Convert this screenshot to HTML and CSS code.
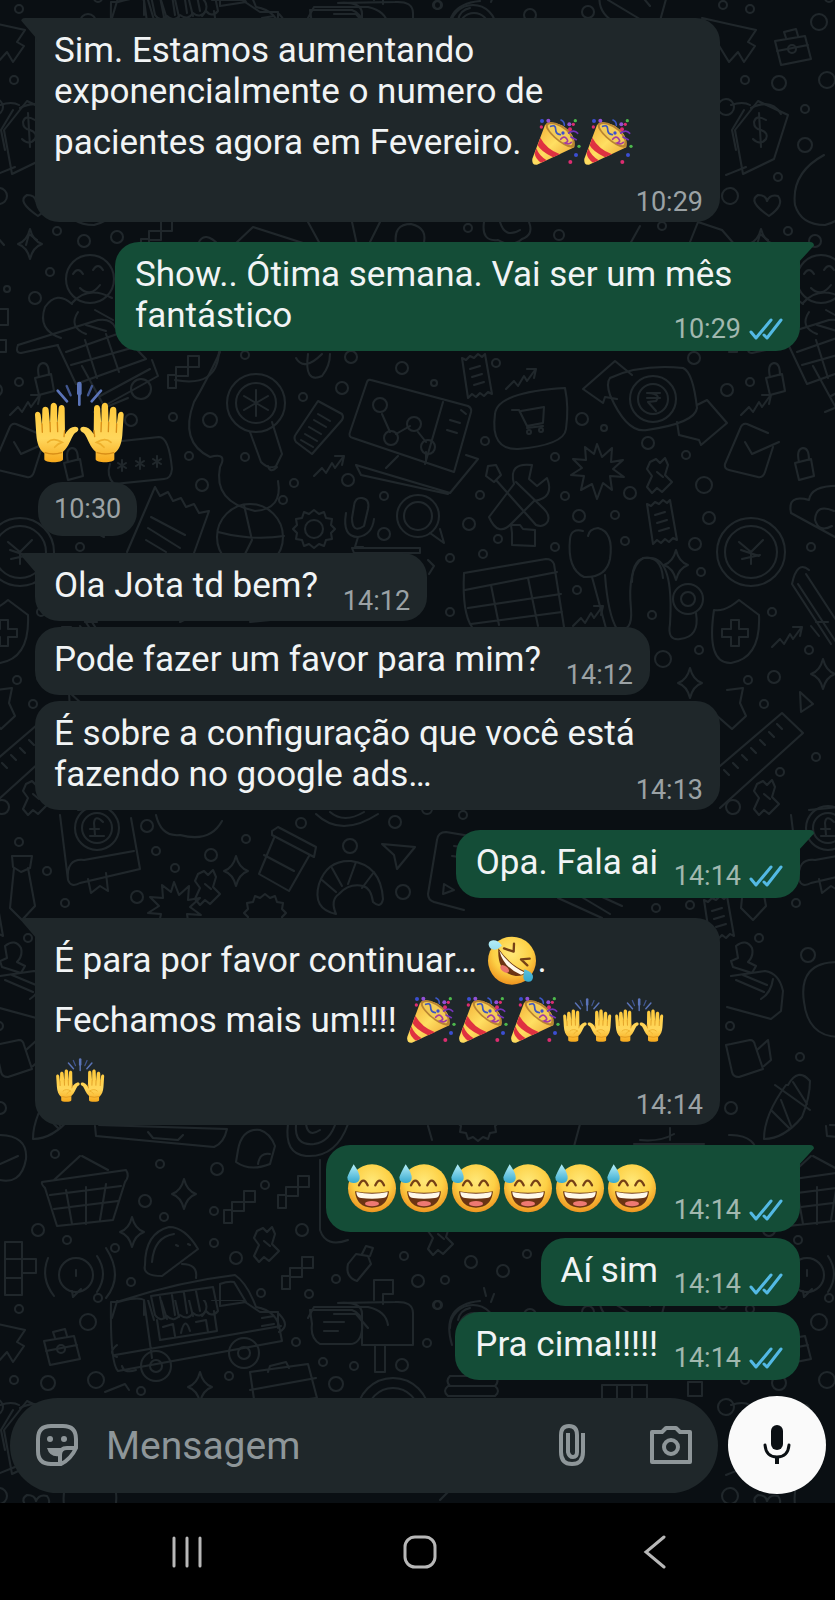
FILE: index.html
```html
<!DOCTYPE html>
<html lang="pt-br">

<head>
    <meta charset="UTF-8">
    <meta name="viewport" content="width=device-width, initial-scale=1.0">
    <title>Conversa</title>

    <link rel="stylesheet" href="styles.css">

</head>

<body>

    <!-- emojis e icones reutilizados -->
    <svg class="defs" aria-hidden="true">
        <defs>
            <linearGradient id="gHand" x1="0" y1="0" x2="0" y2="1">
                <stop offset="0" stop-color="#ffc93a" />
                <stop offset=".6" stop-color="#ffd75c" />
                <stop offset="1" stop-color="#f7a91c" />
            </linearGradient>
            <radialGradient id="gFace" cx=".5" cy=".35" r=".65">
                <stop offset="0" stop-color="#ffe878" />
                <stop offset=".6" stop-color="#fdd045" />
                <stop offset="1" stop-color="#ee9420" />
            </radialGradient>
            <linearGradient id="gDrop" x1="0" y1="0" x2="0" y2="1">
                <stop offset="0" stop-color="#b5eef8" />
                <stop offset="1" stop-color="#35a9cf" />
            </linearGradient>
            <linearGradient id="gCone" x1="0" y1="0" x2="1" y2="1">
                <stop offset="0" stop-color="#f0a52c" />
                <stop offset=".5" stop-color="#ffdf62" />
                <stop offset="1" stop-color="#e8982a" />
            </linearGradient>

            <g id="hand">
                <path fill="url(#gHand)" d="M12 122c0-12 15-12 17 0l4 32 1-46c0-13 18-13 19 0l4 42 2-53c0-14 18-14 19 0l1 53 4-48c1-13 18-12 18 1l1 78c5-9 13-18 22-21 11-4 19 0 18 7-1 6-8 7-13 13-10 14-15 39-33 53v23c0 12-56 12-56 0v-18c-16-12-22-31-24-55z" />
                <path fill="none" stroke="#d88e17" stroke-width="4" stroke-linecap="round" d="M33 150l1 25M57 145l1 28M79 145l1 28M101 170l-2 18M42 236q24 8 50 0" />
                <path fill="none" stroke="#eeb02c" stroke-width="5" stroke-linecap="round" d="M50 205q17-16 43 0q-12 3-22 15" />
            </g>
            <symbol id="hands" viewBox="0 0 288 288">
                <use href="#hand" />
                <use href="#hand" transform="matrix(-1 0 0 1 290 0)" />
                <g stroke-linecap="round" stroke="#5b74b8">
                    <path stroke-width="14" d="M145 30v28" />
                    <path stroke-width="8" d="M145 50v42M80 50l28 32M210 50l-28 32" />
                    <path stroke-width="7" stroke="#40558d" d="M107 36l12 28M183 36l-12 28" />
                </g>
            </symbol>

            <symbol id="party" viewBox="0 0 156 156">
                <path fill="url(#gCone)" d="M45 27L7 128q-3 20 14 18l112-52q6-40-38-66-36-16-50-1z" />
                <path fill="#df3141" d="M31 65q18 34 59 50l-21 9q-36-17-46-36zM19 97q8 22 31 36l-17 7q-17-11-19-28z" />
                <path fill="#b98432" d="M47 27q2-14 30-7 44 14 56 55 3 20-7 20-23-2-54-30-26-24-25-38z" />
                <path fill="#f3cc58" d="M53 29q3-8 24-3 38 13 50 47 2 15-6 15-20-3-45-26-22-21-23-33z" />
                <g fill="none" stroke-width="5" stroke-linecap="round">
                    <path stroke="#3d57c2" d="M62 31q15-6 15 9t14 16M93 12q10 4 10 16" />
                    <path stroke="#a43d9f" d="M92 70q10-12 18-2t-5 13q11 6 19-2" />
                    <path stroke="#7634bb" d="M116 51q17-12 27 1M123 63l16 8" />
                </g>
                <g fill="#dc2d70"><circle cx="34" cy="33" r="5" /><circle cx="120" cy="40" r="6" /><circle cx="130" cy="25" r="5" /><circle cx="121" cy="138" r="6" /></g>
                <g fill="#3b4fd2"><circle cx="36" cy="15" r="6" /><circle cx="138" cy="117" r="6" /><circle cx="99" cy="51" r="5" /></g>
                <g fill="#4db84c"><circle cx="136" cy="14" r="5" /><circle cx="147" cy="91" r="5" /></g>
                <g fill="#9250d6"><circle cx="55" cy="14" r="6" /><circle cx="118" cy="25" r="6" /></g>
            </symbol>

            <symbol id="sweat" viewBox="0 0 156 156">
                <circle cx="78" cy="82" r="72" fill="url(#gFace)" />
                <path fill="none" stroke="#754016" stroke-width="7" stroke-linecap="round" d="M39 73q13-28 26 0M88 73q13-28 26 0" />
                <path fill="#6b3413" d="M27 91q51 9 102 0-5 49-51 49T27 91z" />
                <path fill="#fff9e9" d="M31 93q47 10 94 0 1 17-14 18-33 5-66 0-14-1-14-18z" />
                <ellipse cx="78" cy="128" rx="21" ry="8" fill="#ee7973" />
                <path fill="url(#gDrop)" d="M23 10q20 28 18 43-4 14-19 13Q4 65 4 49q5-15 19-39z" />
            </symbol>

            <symbol id="rofl" viewBox="0 0 156 156">
                <circle cx="78" cy="80" r="72" fill="url(#gFace)" />
                <path fill="#6b3413" d="M37 43q32 48 82 70-4 14-30 13-56-8-52-83z" />
                <path fill="#fff9e9" d="M40 50q31 45 75 65-2 7-10 7-52-21-65-72z" />
                <ellipse cx="56" cy="105" rx="15" ry="9" transform="rotate(38 56 105)" fill="#e8746c" />
                <path fill="none" stroke="#754016" stroke-width="7" stroke-linecap="round" stroke-linejoin="round" d="M54 43l29 10 1-24M131 74l-26 2 19 18" />
                <path fill="url(#gDrop)" d="M48 35q-12-17-27-16-14 2-13 14 3 14 18 14 10-1 22-12zM115 106q25 8 26 23-1 15-15 14-14-2-14-15z" />
            </symbol>

            <symbol id="ticks" viewBox="0 0 34 22">
                <path fill="none" stroke="#53b9e4" stroke-width="3" stroke-linecap="round" stroke-linejoin="round" d="M2 14l5 6L22 2M15 17l3 3L32 2" />
            </symbol>
        </defs>
    </svg>

    <main class="screen">

        <!-- papel de parede -->
        <svg class="wallpaper" aria-hidden="true">
            <defs>
                <path id="spark" d="M0-15Q3-3 12 0 3 3 0 15-3 3-12 0-3-3 0-15z" />
                <path id="zig" d="M-14 9l8-8 4 5 6-10 3 5 8-11m-8-1l9 0-2 9" />
                <path id="burst" d="M0-24l5 13 10-9-1 14 12-2-10 9 11 8-14-1 2 14-9-7-6 16-5-15-11 6 3-14-13-1 11-7-9-9 13 1-1-13 9 7z" />
                <path id="lock" d="M-9-4L7-8l3 17-15 4zM-5-5q-3-13 4-14 6 0 6 12" />
                <path id="candy" d="M-9-14l6-3 4 4 5-5 3 7-3 10 7 7-10 10-5-4-5 5-5-6 5-11-5-7zM-2-4l6 5" />
                <path id="steps" d="M-14 16V3h8v-8H6v-11h11v11H6V4h-12v12z" />
                <path id="gear" d="M0-19l5 4 5-2 2 6 6 1-1 6 4 4-4 4 1 6-6 1-2 6-5-2-5 4-5-4-5 2-2-6-6-1 1-6-4-4 4-4-1-6 6-1 2-6 5 2z" />
                <g id="case"><path d="M-17-8l30-5 6 23-30 6zM-6-11l-2-6 12-3 2 7M-15 2l31-6" /><circle r="4" /></g>
                <g id="note"><path d="M-14-20l4 2 4-4 4 2 4-4 4 3 3-3 7 40-4-2-4 4-4-3-4 4-4-3-4 4zM-6-9l10-3M-4-1l10-3M-2 7l10-3" /></g>

                <g id="tile">
                    <!-- bolinhas -->
                    <circle cx="19" cy="9" r="4" /><circle cx="437" cy="5" r="4" /><circle cx="530" cy="15" r="6" /><circle cx="588" cy="12" r="6" /><circle cx="723" cy="5" r="4" />
                    <circle cx="88" cy="22" r="8" /><circle cx="14" cy="80" r="4" /><circle cx="48" cy="83" r="7" /><circle cx="96" cy="80" r="8" /><circle cx="726" cy="107" r="8" />
                    <circle cx="74" cy="109" r="4" /><circle cx="74" cy="145" r="7" /><circle cx="47" cy="177" r="4" /><circle cx="730" cy="196" r="8" /><circle cx="57" cy="231" r="4" />
                    <circle cx="84" cy="241" r="6" /><circle cx="117" cy="237" r="6" /><circle cx="468" cy="228" r="4" /><circle cx="559" cy="235" r="5" /><circle cx="662" cy="226" r="4" />
                    <circle cx="50" cy="272" r="4" /><circle cx="7" cy="289" r="3" /><circle cx="35" cy="298" r="6" /><circle cx="245" cy="355" r="4" /><circle cx="351" cy="357" r="6" />
                    <circle cx="694" cy="358" r="6" /><circle cx="496" cy="363" r="4" /><circle cx="19" cy="382" r="4" /><circle cx="402" cy="368" r="6" /><circle cx="434" cy="383" r="3" />
                    <circle cx="342" cy="388" r="6" /><circle cx="303" cy="397" r="4" /><circle cx="141" cy="389" r="10" /><circle cx="210" cy="420" r="7" /><circle cx="173" cy="417" r="4" />
                    <circle cx="131" cy="420" r="6" /><circle cx="189" cy="456" r="4" /><circle cx="245" cy="457" r="4" /><circle cx="202" cy="485" r="6" /><circle cx="294" cy="483" r="4" />
                    <circle cx="348" cy="480" r="6" /><circle cx="283" cy="500" r="4" /><circle cx="384" cy="496" r="4" /><circle cx="384" cy="534" r="6" /><circle cx="469" cy="524" r="6" />
                    <circle cx="480" cy="495" r="4" /><circle cx="555" cy="457" r="4" /><circle cx="565" cy="496" r="4" /><circle cx="485" cy="441" r="4" /><circle cx="582" cy="419" r="6" />
                    <circle cx="604" cy="428" r="3" /><circle cx="648" cy="443" r="6" /><circle cx="686" cy="455" r="4" /><circle cx="704" cy="485" r="8" /><circle cx="630" cy="493" r="6" />
                    <circle cx="727" cy="390" r="6" /><circle cx="498" cy="539" r="4" /><circle cx="483" cy="554" r="4" /><circle cx="450" cy="558" r="4" /><circle cx="579" cy="516" r="6" />
                    <circle cx="615" cy="515" r="4" /><circle cx="709" cy="518" r="6" /><circle cx="695" cy="544" r="6" /><circle cx="625" cy="541" r="4" /><circle cx="555" cy="547" r="4" />
                    <circle cx="701" cy="572" r="4" /><circle cx="577" cy="590" r="4" /><circle cx="450" cy="612" r="4" /><circle cx="652" cy="615" r="4" /><circle cx="80" cy="547" r="4" />
                    <circle cx="41" cy="612" r="4" /><circle cx="663" cy="659" r="8" /><circle cx="699" cy="650" r="4" /><circle cx="78" cy="650" r="4" /><circle cx="17" cy="680" r="4" />
                    <circle cx="43" cy="677" r="6" /><circle cx="33" cy="704" r="4" /><circle cx="85" cy="757" r="4" /><circle cx="49" cy="772" r="4" /><circle cx="2" cy="807" r="7" />
                    <circle cx="427" cy="809" r="5" /><circle cx="463" cy="815" r="4" /><circle cx="19" cy="842" r="4" /><circle cx="147" cy="826" r="6" /><circle cx="47" cy="871" r="4" />
                    <circle cx="65" cy="903" r="4" /><circle cx="156" cy="851" r="4" /><circle cx="175" cy="868" r="4" /><circle cx="211" cy="855" r="6" /><circle cx="137" cy="897" r="6" />
                    <circle cx="246" cy="839" r="4" /><circle cx="350" cy="846" r="7" /><circle cx="403" cy="892" r="7" /><circle cx="301" cy="823" r="5" /><circle cx="395" cy="822" r="6" />
                    <circle cx="656" cy="908" r="4" /><circle cx="690" cy="905" r="4" /><circle cx="28" cy="938" r="4" /><circle cx="77" cy="955" r="7" /><circle cx="730" cy="1026" r="4" />
                    <circle cx="69" cy="1057" r="4" /><circle cx="731" cy="1108" r="6" /><circle cx="55" cy="1154" r="4" /><circle cx="160" cy="1164" r="4" /><circle cx="217" cy="1169" r="6" />
                    <circle cx="145" cy="1201" r="6" /><circle cx="214" cy="1211" r="4" /><circle cx="265" cy="1185" r="4" /><circle cx="164" cy="1217" r="4" /><circle cx="38" cy="1230" r="6" />
                    <circle cx="67" cy="1240" r="4" /><circle cx="115" cy="1248" r="4" /><circle cx="214" cy="1243" r="4" /><circle cx="236" cy="1258" r="6" /><circle cx="302" cy="1230" r="6" />
                    <circle cx="404" cy="1256" r="4" /><circle cx="471" cy="1262" r="6" /><circle cx="503" cy="1271" r="6" /><circle cx="418" cy="1281" r="6" /><circle cx="336" cy="1279" r="4" />
                    <circle cx="445" cy="1280" r="4" /><circle cx="131" cy="1282" r="4" /><circle cx="98" cy="1298" r="4" /><circle cx="261" cy="1293" r="4" /><circle cx="309" cy="1294" r="4" />
                    <circle cx="527" cy="1254" r="4" /><circle cx="438" cy="1305" r="4" /><circle cx="296" cy="1342" r="4" /><circle cx="427" cy="1343" r="4" /><circle cx="323" cy="1362" r="4" />
                    <circle cx="354" cy="1366" r="4" /><circle cx="402" cy="1365" r="6" /><circle cx="229" cy="1376" r="4" /><circle cx="336" cy="1384" r="7" /><circle cx="141" cy="1391" r="4" />

                    <!-- repetidos -->
                    <use href="#spark" x="30" y="244" /><use href="#spark" x="676" y="565" /><use href="#spark" x="690" y="683" /><use href="#spark" x="92" y="674" />
                    <use href="#spark" x="236" y="871" /><use href="#spark" x="184" y="1194" /><use href="#spark" x="132" y="1232" /><use href="#spark" x="200" y="1387" />
                    <use href="#zig" x="520" y="380" /><use href="#zig" x="24" y="406" /><use href="#zig" x="328" y="467" /><use href="#zig" x="587" y="617" /><use href="#zig" x="55" y="638" />
                    <use href="#burst" x="597" y="468" /><use href="#burst" x="174" y="906" />
                    <use href="#lock" x="44" y="382" /><use href="#lock" x="73" y="467" />
                    <use href="#candy" x="659" y="476" /><use href="#candy" x="207" y="888" /><use href="#candy" x="266" y="1245" /><use href="#candy" x="35" y="798" /><use href="#candy" x="440" y="1238" />
                    <use href="#steps" x="182" y="372" /><use href="#steps" x="155" y="236" /><use href="#steps" x="296" y="1273" /><use href="#steps" x="292" y="1192" /><use href="#steps" x="238" y="1207" />
                    <use href="#gear" x="314" y="529" /><circle cx="314" cy="529" r="9" /><use href="#gear" x="478" y="1122" /><use href="#gear" x="265" y="913" />
                    <use href="#case" x="61" y="1349" />
                    <use href="#note" x="476" y="378" /><use href="#note" x="661" y="524" /><use href="#note" x="718" y="920" />

                    <!-- topo -->
                    <path d="M-29 18L25 30 17 42l7 4-11 16-6-10-9 10zM112 18l6-20q20-8 26 0v17M148 0l6 20M160-3l7 22M174-5l5 22M188-4l5 20M202-2q9 8 0 18M212 0h30l18 12h18v16" />
                    <path d="M308 18l6-11h54q18 4 20 18M334 14h22l12 14M450 28a23 23 0 0 1 46 0M459 28a15 15 0 0 1 30 0M608 0l50 30M600-8q-4 22 18 32M640-6l10 12M668-8l-10 36" />
                    <path d="M27 101L4 130l8 44 31-15 14-44zM35 120q-10-6-12 2 0 7 7 8 8 3 5 9-6 7-13 0M28 113l2 34" />
                    <path d="M93 155q-33 18-29 50 6 20 30 20 25-6 22-32M0 105q12-4 19 0M-5 175l20-8" />
                    <path d="M38 216q-22-15-11-21 8 0 9 6 3-7 11-5 7 9-9 20z" />
                    <path d="M198 244q6-15 22 2M235 244l18-17 53 17M308 222l12 22M352 222l5 23M396 244q-3-20 15-20 18 4 12 22M380 222l-10 20M484 222q-3 20 14 18 14 8 24-1 12-4 7-17M500 222q5 17 20 8M630 244l10-18M690 242l8-20 24 8 13 15M757 245l3-11 8 6" />
                    <circle cx="90" cy="279" r="24" /><path d="M73 274q5-8 10 0M93 270q5-8 10 0M80 288q10 10 20-3M72 304q-15-14-27 3-8 23 16 31M72 303q16-18 40-5M78 312q-10 15 8 22M95 310l18 10M86 325l20 6" />
                    <path d="M18 345l80-25q13-2 17 7l31 32-70 25-18-38M18 345q-3 8 3 8l37-8M66 352l57-20M71 365l64-18M85 340l12 38M106 334l13 38M-2 309h10v16H-2M-2 340h8v12h-8" />
                    <path d="M82 366l22 40 54-30-6-16M100 396l50-27M175 380q42 8 44-28M128 398l-34 14" />

                    <!-- faixa central -->
                    <path d="M220 352q-14 30-26 50-15 40 16 55 18-5 10 10-7 35 35 44 28-2 23-30M296 358q8 14 26-4M308 354q-4 30 14 22 8-10 8-22" />
                    <circle cx="256" cy="403" r="29" /><circle cx="256" cy="403" r="20" /><path d="M256 390v26M244 396l24 14M244 410l24-14M250 432l11 30q8 8 15 4l6-12-10-32M268 466q2 8 9 1" />
                    <path d="M318 401l24 13q2 3 0 6l-30 34-16-12q-3-4 0-8zM318 414l12 7M314 420l12 7M309 427l12 7M305 434l12 7M301 440l12 7" />
                    <path d="M371 380l97 26q4 2 3 6l-17 60-101-34q-5-1-3-6l17-50q1-3 4-2zM443 402l-18 62M461 410l5 4M450 420l10 3M447 430l10 3M356 465l94 28 28-34-12-4M356 465l5 10 87 19M386 468l12-12M382 414l8 18M396 434l14-8M418 432l8 10M426 452v10" />
                    <circle cx="380" cy="405" r="7" /><circle cx="391" cy="438" r="7" /><circle cx="414" cy="424" r="7" /><circle cx="428" cy="447" r="7" />
                    <path d="M565 388q-68 4-70 26-5 36 23 35 46-4 48-20 3-22-1-41zM512 410h7l8 16 16-3 1-16-23 4M527 428l16-2" /><circle cx="529" cy="432" r="2" /><circle cx="541" cy="430" r="2" />
                    <path d="M632 375l-17-14-32 28 20 14 2-6 12 2M610 378q30-14 73-10 10 4 14 40-2 15-50 22-20 4-37-35-4-12 0-17zM697 405l10-5 20 23-26 22-2-5-20-5-2-13" />
                    <circle cx="653" cy="399" r="23" /><circle cx="653" cy="399" r="15" /><path d="M647 393h13M647 398h13M648 393q14 1 8 8l-8 1 8 9" />
                    <path d="M37 433l-21-9q-5-1-7 5l-15 35q-1 5 4 6l29 7q5 1 7-5l8-25M14 442l7 12 27-12" />
                    <path d="M488 466l8-1 5 10-7 7-8-6zM496 480l40 45q8 3 12-4 2-6-4-12l-28-27M489 517l25-33q-6-22 18-19l-3 14 8 7 10-8q8 20-13 23l-22 22q-14 15-23-6z" />
                    <circle cx="418" cy="516" r="21" /><circle cx="418" cy="516" r="14" /><path d="M430 533l14 10-4-14" />
                    <path d="M354 506q1-9 8-8 8 1 6 11l-4 17q-12 8-12-8zM346 513q-4 24 12 24 14-2 16-18M358 537l-3 10h8" />
                    <circle cx="250" cy="537" r="33" /><path d="M244 505l8 35M218 532q34 9 66 4M252 540l-14 28" />
                    <path d="M155 487l-28 65M155 487l5 9 8-4 5 9 8-3 5 9 8-3 5 9 10-2-15 42M151 517l34 18M148 528l32 20M146 540l20 12" />
                    <path d="M113 442l46-5q10 0 13 32-1 10-8 10l-50 5q-8-8-4-20M122 460v11M118 463l8 5M126 463l-8 5M140 458v11M136 461l8 5M144 461l-8 5M157 456v11M153 459l8 5M161 459l-8 5" />
                    <path d="M512 533v12l23 1v-16l-12-1-3-4h-9zM583 531q-12-3-13 8-3 30 14 38 22 1 26-18 4-27-12-31-9 1-10 8M592 577l15 55M605 575q3 40 12 54 16 4 14-20-4-40 12-51 18-3 20 20" />
                    <circle cx="688" cy="599" r="15" /><circle cx="688" cy="599" r="7" /><path d="M650 558q-18-2-18 24M650 558q24 0 20 66-3 17 10 15 20-2 16-26" />
                    <circle cx="20" cy="552" r="34" /><circle cx="20" cy="552" r="26" /><path d="M20 552v12M20 552l-12-10M20 552l12-12M10 550l18 6M11 559l18-4" />
                    <path d="M845 486q-34-2-36 14-22-6-18 13l44 24M834 511q-18-8-19 9 4 13 17 6M809 570q-12-10-17 14l39 60M798 584l38 58M806 574l30 46" />
                    <path d="M464 573l82-14q6 0 8 5l10 63-9 9M464 573q-2 40 8 54M465 590l92-18M468 608l93-14M471 624l91-12M491 585l8 40M528 578l10 48M352 548h68v5h-66zM428 560l6 6-5 8" />
                    <path d="M8 600q-14 12-25 10-8 54 17 53 30-5 28-48zM0 620h8v9h9v8H8v9H0v-9h-9v-8h9z" />
                    <path d="M727 690l16-2-3 15 6 13-14 13-16-14M800 692l13 12-12 8zM720 766l62-53 21 20-83 75M724 770l5 5M733 763l5 5M742 755l5 5M751 748l5 5M760 740l5 5M769 732l5 5M777 724l5 5" />
                    <path d="M80 626l8 10M85 622h12M180 622l8-4M250 622l20-2" />

                    <!-- parte de baixo -->
                    <path d="M60 815l8 65q3 8 12 3l60-14-9-51M68 880q-2-22 16-20l50-9M88 879l3 14 9-7 8 5-2-18M78 810l40-4" /><circle cx="97" cy="828" r="22" /><circle cx="97" cy="828" r="15" /><path d="M103 822q-8-8-9 1l1 12M90 829h9M90 836h14" />
                    <path d="M156 815q5 22 24 20 30 8 42-14M316 814q25 24 62 0M330 812q14 12 34 0M12 856h20l-2 12-9 4-8-5zM14 868l-4 40 12 12 13-14-7-38M272 835l42 22 2-10-38-20-6 4zM274 838l-15 36 30 17 20-35M264 855l30 16" />
                    <path d="M336 914q-24-5-17-30 8-24 32-23 30 4 32 38-2 10-10 3-2-14-10-16-14-3-24 8-9 6-3 20zM332 868l10 18M356 862l-8 22M374 872l-12 16M322 880l14 12" />
                    <path d="M382 844l33 3-18 22-3-14zM470 836l-24-4q-8 0-9 8l-9 54q0 6 6 8l30 8M454 846l14 2M452 856l14 2M444 884l10 6-11 4zM558 898l44 20M580 896l30 18M600 896l22 10" />
                    <path d="M5 946q10-8 16 2 2 8-4 14l8 4-4 7-19-6-2-6 7-3zM0 976l34-5q14 2 18 20l-2 20-10 8-44-12M5 980l28 12M12 975l24 10M838 962q-40 0-34 40 4 34 34 35M30 999q10-6 12-20" />
                    <path d="M-5 1045l24-5q4 0 5 5l8 24-24 8q-6 0-7-5zM26 1050l11-10 3 20-7 6M55 1085q-22 30-22 54 20 0 38-22 8-20 8-36-12-14-22 4zM50 1100l10 26M44 1085l35 25M62 1082l14 22M40 1110l18 18" />
                    <path d="M95 1126l1 10 118 11q10-4 13-18l-128-4M148 1132l5 6 25 2 5-5M238 1150q4-22 22-20 10 3 15 16l-5 18q-20 8-34-2zM258 1164q2-12 12-10M288 1124q-4 30 18 32 30 2 42-32M296 1124q-2 22 18 20 16-2 22-22M306 1124q2 14 14 6" />
                    <path d="M428 1126l4 14M580 1124l-8 30M640 1140q20 2 34-6M670 1128v12M634 1144h70M-2 1135q30 0 28 24-5 28-30 20M0 1164l18-8" />
                    <path d="M42 1182l84-12q4 6-1 12l-12 38-56 6-12-38q-4-4-3-6zM50 1195l71-9M54 1209l64-8M66 1190l6 34M86 1187v37M106 1184l-6 36M54 1180l26-24M82 1156l26 14" />
                    <path d="M145 1265q0-32 24-38 16 0 29 22l-36 27q-20 0-17-11zM152 1262q2-25 22-28M176 1245l2 1M188 1244l2 1M182 1264q16 0 14 14" />
                    <path d="M5 1242h17v17h14v14H22v22H5zM5 1259h17M5 1278h17M22 1259v14M320 1160v70q6 18 28 10M348 1264l8-10 12 2 3 8-14 17q-12-4-9-17zM362 1254l4-8 7 2-3 8" />
                    <circle cx="76" cy="1275" r="17" /><path d="M72 1291l1 6 8-8M76 1270v6M97 1256q12 18 0 36M106 1248q18 28 0 50M54 1296q-14-18-6-38" />
                    <path d="M117 1302q60-20 118-27 12 8 21 32 22 4 24 24l2 10-164 30q-8-8-7-69zM118 1302q20-6 26-2l8 58M115 1355l166-29M220 1284q8-3 14-2l12 20-26 4zM151 1296l62-9 5 24q-6 7-12 0-6 8-13 2-5 8-13 2-6 8-13 1-6 7-12-1zM160 1297l4 20M172 1295l3 20M184 1293l3 20M196 1291l4 20M157 1320l3 20 57-9-3-20M163 1327l10-3 2 12M196 1322l10-2 2 12M181 1333q4-18 9-2M262 1318l12-2M262 1326l12-2M279 1314q12 12 0 18M117 1345q-10 8 0 12M122 1366q2 8 14 4" />
                    <circle cx="156" cy="1366" r="15" /><circle cx="156" cy="1366" r="6" /><circle cx="244" cy="1353" r="15" /><circle cx="244" cy="1353" r="6" />
                    <path d="M310 1310h42q12 4 10 20-2 14-12 14h-30q-10-6-8-20zM338 1303q25-2 24 12v30h51v-32q0-12-18-11zM324 1322h20M324 1331h14M374 1300v-20h19v14h-10v10M375 1345v27h10v-27" />
                    <path d="M452 1345q-12-40 28-44M458 1320q2-10 12-12M484 1288l2 8M494 1294l-3 8M250 1372l58-8 9 34-62 8zM268 1372l2-6 16-4 3 6M250 1390l66-12" />
                    <circle cx="393" cy="1414" r="36" /><circle cx="393" cy="1414" r="26" /><path d="M450 1376h45q5 5 0 10h-45q-5-5 0-10zM448 1386h47q6 5 0 10h-47q-6-5 0-10zM602 1385h45v22h-45zM617 1385v22M632 1385v22M688 1382h14v14h-14zM105 1392l20-8 4 6" />
                    <path d="M20 1408q20-10 30 6M440 1500l8-8M5 1450l-4-20 12-20" />
                </g>

                <pattern id="doodles" width="731" height="1300" patternUnits="userSpaceOnUse">
                    <use href="#tile" />
                    <use href="#tile" x="731" />
                    <use href="#tile" x="-731" />
                    <use href="#tile" y="-1300" />
                    <use href="#tile" x="-731" y="-1300" />
                </pattern>
            </defs>
            <rect width="100%" height="100%" fill="url(#doodles)" />
        </svg>

        <section class="chat">

            <div class="group">
                <div class="bubble in tail">
                    <p>Sim. Estamos aumentando exponencialmente o numero de pacientes agora em Fevereiro. <svg class="emoji" role="img" aria-label="festa"><use href="#party" /></svg><svg class="emoji" role="img" aria-label="festa"><use href="#party" /></svg></p>
                    <time>10:29</time>
                </div>
            </div>

            <div class="group">
                <div class="bubble out tail">
                    <p>Show.. Ótima semana. Vai ser um mês fantástico</p>
                    <time>10:29 <svg class="ticks"><use href="#ticks" /></svg></time>
                </div>
            </div>

            <div class="reaction">
                <svg class="emojiBig" role="img" aria-label="mãos para cima"><use href="#hands" /></svg>
                <time>10:30</time>
            </div>

            <div class="group">
                <div class="bubble in tail">
                    <p>Ola Jota td bem?</p>
                    <time>14:12</time>
                </div>
                <div class="bubble in">
                    <p>Pode fazer um favor para mim?</p>
                    <time>14:12</time>
                </div>
                <div class="bubble in">
                    <p>É sobre a configuração que você está fazendo no google ads…</p>
                    <time>14:13</time>
                </div>
            </div>

            <div class="group">
                <div class="bubble out tail">
                    <p>Opa. Fala ai</p>
                    <time>14:14 <svg class="ticks"><use href="#ticks" /></svg></time>
                </div>
            </div>

            <div class="group">
                <div class="bubble in tail">
                    <p>É para por favor continuar… <svg class="emoji" role="img" aria-label="rolando de rir"><use href="#rofl" /></svg>.<br>
                        Fechamos mais um!!!! <svg class="emoji" role="img" aria-label="festa"><use href="#party" /></svg><svg class="emoji" role="img" aria-label="festa"><use href="#party" /></svg><svg class="emoji" role="img" aria-label="festa"><use href="#party" /></svg><svg class="emoji" role="img" aria-label="mãos para cima"><use href="#hands" /></svg><svg class="emoji" role="img" aria-label="mãos para cima"><use href="#hands" /></svg><svg class="emoji" role="img" aria-label="mãos para cima"><use href="#hands" /></svg></p>
                    <time>14:14</time>
                </div>
            </div>

            <div class="group">
                <div class="bubble out tail">
                    <p><svg class="emoji" role="img" aria-label="riso com suor"><use href="#sweat" /></svg><svg class="emoji" role="img" aria-label="riso com suor"><use href="#sweat" /></svg><svg class="emoji" role="img" aria-label="riso com suor"><use href="#sweat" /></svg><svg class="emoji" role="img" aria-label="riso com suor"><use href="#sweat" /></svg><svg class="emoji" role="img" aria-label="riso com suor"><use href="#sweat" /></svg><svg class="emoji" role="img" aria-label="riso com suor"><use href="#sweat" /></svg></p>
                    <time>14:14 <svg class="ticks"><use href="#ticks" /></svg></time>
                </div>
                <div class="bubble out">
                    <p>Aí sim</p>
                    <time>14:14 <svg class="ticks"><use href="#ticks" /></svg></time>
                </div>
                <div class="bubble out">
                    <p>Pra cima!!!!!</p>
                    <time>14:14 <svg class="ticks"><use href="#ticks" /></svg></time>
                </div>
            </div>

        </section>

        <form class="composer">
            <div class="field">
                <button type="button" aria-label="Figurinhas">
                    <svg width="42" height="42" viewBox="0 0 42 42">
                        <path fill="none" stroke="currentColor" stroke-width="4" stroke-linejoin="round" d="M15 2h12q13 0 13 13v9Q35 35 25 40H15Q2 40 2 27V15Q2 2 15 2zM24 40V31q0-7 7-7h8" />
                        <path fill="currentColor" d="M11 24h19q-7 1-6 8-10 2-13-8z" />
                        <circle cx="14" cy="15" r="3" fill="currentColor" /><circle cx="28" cy="15" r="3" fill="currentColor" />
                    </svg>
                </button>
                <input type="text" placeholder="Mensagem" aria-label="Mensagem">
                <button type="button" aria-label="Anexar">
                    <svg width="26" height="42" viewBox="0 0 26 42">
                        <path fill="none" stroke="currentColor" stroke-width="4" d="M24 9v19q0 12-11 12T2 28V11q0-9 8-9t8 9v17q0 5-4 5t-5-5V9" />
                    </svg>
                </button>
                <button type="button" class="camera" aria-label="Câmera">
                    <svg width="42" height="38" viewBox="0 0 42 38">
                        <path fill="none" stroke="currentColor" stroke-width="4" stroke-linejoin="round" d="M2 6h10l4-4h10l4 4h10v30H2z" />
                        <circle cx="21" cy="21" r="7" fill="none" stroke="currentColor" stroke-width="4" />
                    </svg>
                </button>
            </div>
            <button type="button" class="mic" aria-label="Gravar áudio">
                <svg width="28" height="40" viewBox="0 0 28 40">
                    <rect x="8" y="0" width="12" height="25" rx="6" fill="currentColor" />
                    <path fill="none" stroke="currentColor" stroke-width="3" stroke-linecap="round" d="M2 20q1 12 12 12t12-12" />
                    <path stroke="currentColor" stroke-width="4" d="M14 32v7" />
                </svg>
            </button>
        </form>

    </main>

    <nav class="navbar">
        <button type="button" aria-label="Recentes">
            <svg width="34" height="34" viewBox="0 0 34 34"><path stroke="currentColor" stroke-width="3" stroke-linecap="round" d="M4 3v28M17 3v28M30 3v28" /></svg>
        </button>
        <button type="button" aria-label="Início">
            <svg width="34" height="34" viewBox="0 0 34 34"><rect x="2" y="2" width="30" height="30" rx="10" fill="none" stroke="currentColor" stroke-width="3" /></svg>
        </button>
        <button type="button" aria-label="Voltar">
            <svg width="34" height="34" viewBox="0 0 34 34"><path fill="none" stroke="currentColor" stroke-width="3" stroke-linecap="round" d="M28 2L10 17l18 15" /></svg>
        </button>
    </nav>

</body>

</html>
```

FILE: styles.css
```css
* {
    box-sizing: border-box;
}

body {
    margin: 0;
    min-height: 100vh;
    display: flex;
    flex-direction: column;
    background-color: #000;
    color: #f1f4f5;
    font-family: Roboto, "Liberation Sans", sans-serif;
    font-size: 35px;
    line-height: 41px;
}

button {
    display: flex;
    align-items: center;
    justify-content: center;
    padding: 0;
    border: 0;
    background: none;
    color: inherit;
}

.defs {
    position: absolute;
    width: 0;
    height: 0;
}

.screen {
    position: relative;
    flex: 1;
    display: flex;
    flex-direction: column;
    background-color: #0a0f13;
    overflow: hidden;
}

.wallpaper {
    position: absolute;
    width: 100%;
    height: 100%;
    fill: none;
    stroke: #20272b;
    stroke-width: 2;
    stroke-linejoin: round;
    stroke-linecap: round;
}

.wallpaper rect {
    stroke: none;
}

.chat {
    position: relative;
    flex: 1;
    display: flex;
    flex-direction: column;
    gap: 20px;
    padding: 18px 35px 16px;
}

.group {
    display: flex;
    flex-direction: column;
    gap: 6px;
}

/* texto e hora dividem a mesma celula, a hora fica no canto */
.bubble {
    position: relative;
    display: grid;
    max-width: calc(100% - 80px);
    padding: 12px 17px 0 20px;
    border-radius: 24px;
}

.bubble p {
    grid-area: 1 / 1;
    display: flow-root;
    margin: 0 0 15px;
}

/* reserva o lugar da hora no fim do texto */
.bubble p::after {
    content: "";
    float: right;
    width: 92px;
    height: 35px;
}

.bubble time {
    grid-area: 1 / 1;
    place-self: end;
    margin-bottom: 4px;
}

time {
    display: flex;
    align-items: center;
    gap: 8px;
    color: #9ba2a5;
    font-size: 27px;
    line-height: 32px;
}

.in {
    align-self: flex-start;
    padding-left: 19px;
    background-color: #1f272a;
}

.out {
    align-self: flex-end;
    background-color: #144d37;
}

.out p::after {
    width: 125px;
}

.out time {
    margin-bottom: 6px;
    color: #a1b8af;
}

.tail::before {
    content: "";
    position: absolute;
    top: 0;
    width: 16px;
    height: 24px;
    background-color: inherit;
}

.in.tail {
    border-top-left-radius: 0;
}

.in.tail::before {
    left: -14px;
    border-top-left-radius: 4px;
    clip-path: polygon(0 0, 100% 0, 100% 100%, 90% 80%, 0 10%);
}

.out.tail {
    border-top-right-radius: 0;
}

.out.tail::before {
    right: -14px;
    border-top-right-radius: 4px;
    clip-path: polygon(0 0, 100% 0, 100% 15%, 10% 80%, 0 100%);
}

.emoji {
    box-sizing: content-box;
    width: 52px;
    height: 52px;
    padding: 4px 0;
    vertical-align: -18px;
}

.ticks {
    width: 34px;
    height: 22px;
}

.reaction {
    display: flex;
    flex-direction: column;
    align-items: flex-start;
    gap: 12px;
    margin: 3px 0 -3px;
}

.emojiBig {
    width: 96px;
    height: 96px;
    margin-left: -4px;
}

.reaction time {
    margin-left: 3px;
    padding: 11px 16px;
    border-radius: 24px;
    background-color: #1f272a;
}

.composer {
    position: relative;
    display: flex;
    align-items: center;
    gap: 10px;
    padding: 0 9px 9px 10px;
}

.field {
    flex: 1;
    min-width: 0;
    display: flex;
    align-items: center;
    height: 95px;
    padding: 0 26px;
    border-radius: 48px;
    background-color: #1f272a;
    color: #8e9699;
}

.field input {
    flex: 1;
    min-width: 0;
    padding: 2px 28px 0;
    border: 0;
    outline: none;
    background: none;
    color: #f1f4f5;
    font: inherit;
    font-size: 39px;
}

.field input::placeholder {
    color: #8e9699;
    opacity: 1;
}

.camera {
    margin-left: 65px;
}

.mic {
    flex: none;
    width: 98px;
    height: 98px;
    border-radius: 50%;
    background-color: #fafafa;
    color: #0a0f13;
}

.navbar {
    display: flex;
    height: 97px;
    padding: 0 65px 0 70px;
    color: #b8b8b8;
}

.navbar button {
    flex: 1;
}
```
